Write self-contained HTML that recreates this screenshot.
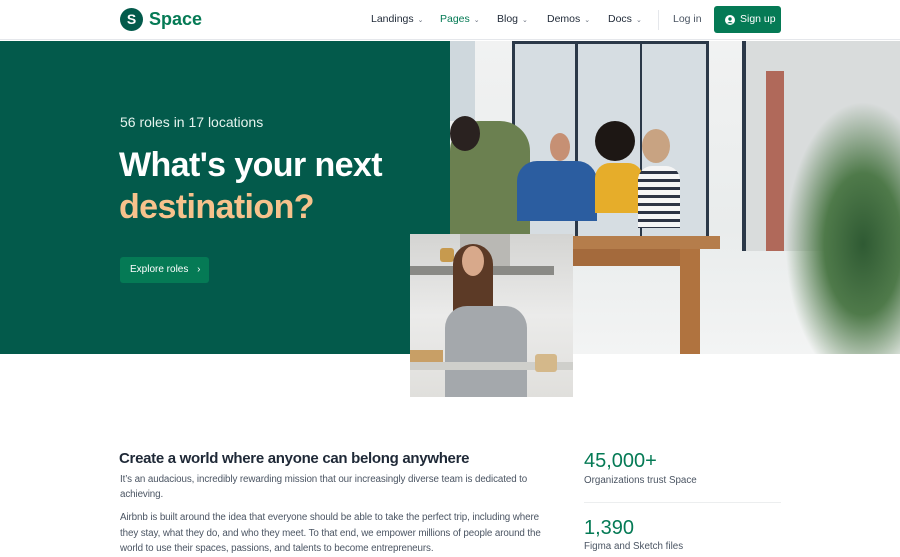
<!DOCTYPE html>
<html><head><meta charset="utf-8"><style>
*{margin:0;padding:0;box-sizing:border-box}
body{width:900px;height:545px;overflow:hidden;background:#fff;font-family:"Liberation Sans",sans-serif;position:relative}
.hdr{position:absolute;left:0;top:0;width:900px;height:40px;border-bottom:1px solid #e5e7eb;background:#fff}
.logo{position:absolute;left:120px;top:8px;width:23px;height:23px;border-radius:50%;background:#035a4b;color:#fff;font-weight:bold;font-size:14px;text-align:center;line-height:23px}
.brand{position:absolute;left:149px;top:9px;font-size:18px;font-weight:bold;color:#057a55}
.nav{position:absolute;top:13px;font-size:10.5px;color:#1f2937}
.nav span{font-size:7px;color:#6b7280;margin-left:4px}
.btn{position:absolute;left:714px;top:6px;width:67px;height:27px;background:#057a55;border-radius:3px;color:#fff;font-size:10.5px;line-height:27px;padding-left:26px}
.hero{position:absolute;left:0;top:41px;width:450px;height:313px;background:#035a4b}
.abs{position:absolute}
</style></head><body>
<div class="hdr">
<div class="logo">S</div><div class="brand">Space</div>
<div class="nav" style="left:371px">Landings<span>⌄</span></div>
<div class="nav" style="left:440px;color:#057a55">Pages<span>⌄</span></div>
<div class="nav" style="left:497px">Blog<span>⌄</span></div>
<div class="nav" style="left:547px">Demos<span>⌄</span></div>
<div class="nav" style="left:608px">Docs<span>⌄</span></div>
<div class="abs" style="left:658px;top:10px;width:1px;height:20px;background:#e5e7eb"></div>
<div class="nav" style="left:673px;color:#4b5563">Log in</div>
<div class="btn"><svg class="abs" style="left:11px;top:9px" width="10" height="10" viewBox="0 0 10 10"><circle cx="5" cy="5" r="5" fill="#fff"/><circle cx="5" cy="4" r="1.7" fill="#057a55"/><path d="M2 8.3Q5 5.5 8 8.3" fill="#057a55"/></svg>Sign up</div>
</div>
<div class="hero">
<div class="abs" style="left:120px;top:73px;color:#e5f3ee;font-size:14px">56 roles in 17 locations</div>
<div class="abs" style="left:119px;top:103px;color:#fff;font-size:34px;font-weight:bold;line-height:42px;letter-spacing:-0.6px">What's your next<br><span style="color:#f7c28c">destination?</span></div>
<div class="abs" style="left:120px;top:216px;width:89px;height:26px;background:#057a55;border-radius:3px;color:#fff;font-size:10px;line-height:26px;padding-left:10px">Explore roles <span style="margin-left:6px">›</span></div>
</div>
<!-- big photo -->
<div class="abs" style="left:450px;top:41px;width:450px;height:313px;background:linear-gradient(180deg,#f1f2f2,#e9ecec 60%,#f3f4f4);overflow:hidden">
<div class="abs" style="left:0;top:0;width:25px;height:80px;background:#cfd8dd"></div>
<div class="abs" style="left:62px;top:0;width:197px;height:200px;background:#d6dde2;border:3px solid #2b3848;border-bottom:none"></div>
<div class="abs" style="left:125px;top:0;width:3px;height:200px;background:#2b3848"></div>
<div class="abs" style="left:190px;top:0;width:2px;height:200px;background:#2b3848"></div>
<div class="abs" style="left:292px;top:0;width:158px;height:210px;background:#d9dcdc;border-left:4px solid #2b3848"></div>
<div class="abs" style="left:316px;top:30px;width:18px;height:180px;background:#b0695a"></div>
<div class="abs" style="left:0;top:80px;width:80px;height:120px;background:#6b8050;border-radius:30px 30px 0 0"></div>
<div class="abs" style="left:0;top:75px;width:30px;height:35px;background:#2a2220;border-radius:50%"></div>
<div class="abs" style="left:67px;top:120px;width:80px;height:60px;background:#2b5da0;border-radius:20px 20px 0 0"></div>
<div class="abs" style="left:100px;top:92px;width:20px;height:28px;background:#c69074;border-radius:50%"></div>
<div class="abs" style="left:145px;top:80px;width:40px;height:40px;background:#1d1714;border-radius:50%"></div>
<div class="abs" style="left:145px;top:122px;width:48px;height:50px;background:#e6ad2a;border-radius:15px 15px 0 0"></div>
<div class="abs" style="left:192px;top:88px;width:28px;height:34px;background:#c8a382;border-radius:50%"></div>
<div class="abs" style="left:188px;top:125px;width:42px;height:62px;background:repeating-linear-gradient(180deg,#f5f5f5 0 5px,#2d3444 5px 8px);border-radius:14px 14px 0 0"></div>
<div class="abs" style="left:70px;top:195px;width:200px;height:13px;background:#b57d4b"></div>
<div class="abs" style="left:72px;top:208px;width:178px;height:17px;background:#a46a3c"></div>
<div class="abs" style="left:72px;top:208px;width:12px;height:105px;background:#a66b3c"></div>
<div class="abs" style="left:230px;top:208px;width:20px;height:105px;background:#b0733f"></div>
<div class="abs" style="left:335px;top:60px;width:130px;height:260px;background:radial-gradient(ellipse at 60% 55%,#2f5a33 0,#4f7a4a 35%,rgba(200,210,200,0) 70%)"></div>
</div>
<!-- small photo -->
<div class="abs" style="left:410px;top:234px;width:163px;height:163px;background:linear-gradient(180deg,#d4d4d2,#ebebea 50%,#e0dfdc);overflow:hidden">
<div class="abs" style="left:0;top:32px;width:144px;height:9px;background:#8a8a86"></div>
<div class="abs" style="left:50px;top:0;width:50px;height:32px;background:#b9b8b4"></div>
<div class="abs" style="left:30px;top:14px;width:14px;height:14px;background:#c79a4e;border-radius:3px"></div>
<div class="abs" style="left:43px;top:10px;width:40px;height:90px;background:#5c3a26;border-radius:20px 20px 6px 6px"></div>
<div class="abs" style="left:52px;top:12px;width:22px;height:30px;background:#d8a98b;border-radius:50%"></div>
<div class="abs" style="left:35px;top:72px;width:82px;height:91px;background:#a4a8ac;border-radius:22px 22px 0 0"></div>
<div class="abs" style="left:0;top:116px;width:33px;height:12px;background:#c89f66"></div>
<div class="abs" style="left:0;top:128px;width:163px;height:8px;background:#cfcfcb"></div>
<div class="abs" style="left:125px;top:120px;width:22px;height:18px;background:#d4b88a;border-radius:3px"></div>
</div>
<!-- content -->
<div class="abs" style="left:119px;top:450px;font-size:15px;font-weight:bold;color:#1f2937;letter-spacing:-0.3px">Create a world where anyone can belong anywhere</div>
<div class="abs" style="left:120px;top:472px;width:420px;font-size:9.8px;line-height:15px;color:#4b5563;letter-spacing:-0.1px">It’s an audacious, incredibly rewarding mission that our increasingly diverse team is dedicated to achieving.</div>
<div class="abs" style="left:120px;top:510px;width:425px;font-size:9.8px;line-height:15.5px;color:#4b5563;letter-spacing:-0.1px">Airbnb is built around the idea that everyone should be able to take the perfect trip, including where they stay, what they do, and who they meet. To that end, we empower millions of people around the world to use their spaces, passions, and talents to become entrepreneurs.</div>
<div class="abs" style="left:584px;top:450px;font-size:20px;color:#057a55">45,000+</div>
<div class="abs" style="left:584px;top:475px;font-size:9.8px;color:#4b5563">Organizations trust Space</div>
<div class="abs" style="left:584px;top:502px;width:197px;height:1px;background:#eceeef"></div>
<div class="abs" style="left:584px;top:517px;font-size:20px;color:#057a55">1,390</div>
<div class="abs" style="left:584px;top:541px;font-size:9.8px;color:#4b5563">Figma and Sketch files</div>
</body></html>
